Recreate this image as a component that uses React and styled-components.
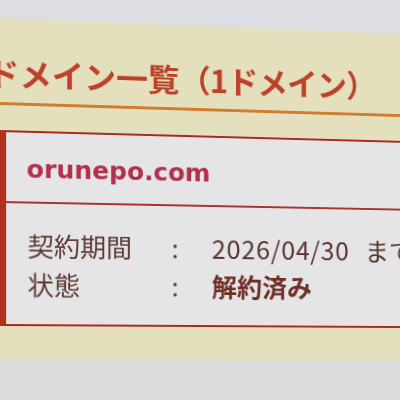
import React from "react";
import styled, { createGlobalStyle } from "styled-components";

const GlobalStyle = createGlobalStyle`
  html, body {
    margin: 0;
    padding: 0;
    width: 400px;
    height: 400px;
    overflow: hidden;
    background: #dcdee3;
  }
  body {
    font-family: "Noto Sans CJK JP", "Noto Sans", sans-serif;
  }
`;

/* the screen is photographed at a slight angle: a gentle keystone */
const Page = styled.div`
  width: 420px;
  height: 410px;
  overflow: hidden;
  display: flex;
  flex-direction: column;
  background: #dddcdc;
  transform-origin: 0 0;
  transform: matrix3d(1.0232, 0.0429, 0, 0.000116, 0, 1, 0, 0, 0, 0, 1, 0, 0, 0, 0, 1);
`;

const TopStrip = styled.div`
  height: 18px;
  flex: none;
  background: #dcdee3;
`;

const Section = styled.section`
  flex: none;
  background: #e4e0bd;
  padding: 38px 0 34px;
`;

const Title = styled.h2`
  margin: 0 0 25px;
  padding: 0 0 14px;
  border-bottom: 3px solid #d27c30;
  font-family: "Noto Sans CJK JP", sans-serif;
  font-size: 32px;
  line-height: 32px;
  font-weight: 700;
  color: #bd4129;
  white-space: nowrap;
  overflow: hidden;
`;

const TitleText = styled.span`
  display: inline-block;
  margin-left: -13px;
`;

const Count = styled.span`
  letter-spacing: -1px;
`;

const Card = styled.div`
  background: #e5e5e8;
  border-top: 2px solid #a8291f;
  border-bottom: 2px solid #a8291f;
  border-left: 6px solid #b3311c;
`;

const Domain = styled.div`
  padding: 22px 0 17px 20px;
  border-bottom: 2px solid #a8342e;
  font-family: "DejaVu Sans", sans-serif;
  font-weight: 700;
  font-size: 25px;
  line-height: 30px;
  color: #b3304b;
`;

const InfoList = styled.dl`
  margin: 0;
  padding: 22px 0 21px 21px;
  display: grid;
  grid-template-columns: 141px 44px 1fr;
  font-family: "Noto Sans CJK JP", sans-serif;
  font-size: 26px;
  line-height: 39px;
  color: #5e3a33;
  white-space: nowrap;
`;

const Label = styled.dt`
  margin: 0;
`;

const Colon = styled.span`
  padding-left: 3px;
`;

const Value = styled.dd`
  margin: 0;
  font-weight: ${(p) => (p.$strong ? 600 : 400)};
  color: ${(p) => (p.$strong ? "#6e3024" : "#5a3630")};
  overflow: hidden;
`;

const DateText = styled.span`
  letter-spacing: 0.8px;
`;

const Suffix = styled.span`
  margin-left: 16px;
`;

const Rest = styled.div`
  flex: 1;
  background: #dddcdc;
`;

export default function App() {
  return (
    <>
      <GlobalStyle />
      <Page>
        <TopStrip />
        <Section>
          <Title>
            <TitleText>
              ドメイン一覧<Count>（1ドメイン）</Count>
            </TitleText>
          </Title>
          <Card>
            <Domain>orunepo.com</Domain>
            <InfoList>
              <Label>契約期間</Label>
              <Colon>:</Colon>
              <Value>
                <DateText>2026/04/30</DateText>
                <Suffix>まで</Suffix>
              </Value>
              <Label>状態</Label>
              <Colon>:</Colon>
              <Value $strong>解約済み</Value>
            </InfoList>
          </Card>
        </Section>
        <Rest />
      </Page>
    </>
  );
}
